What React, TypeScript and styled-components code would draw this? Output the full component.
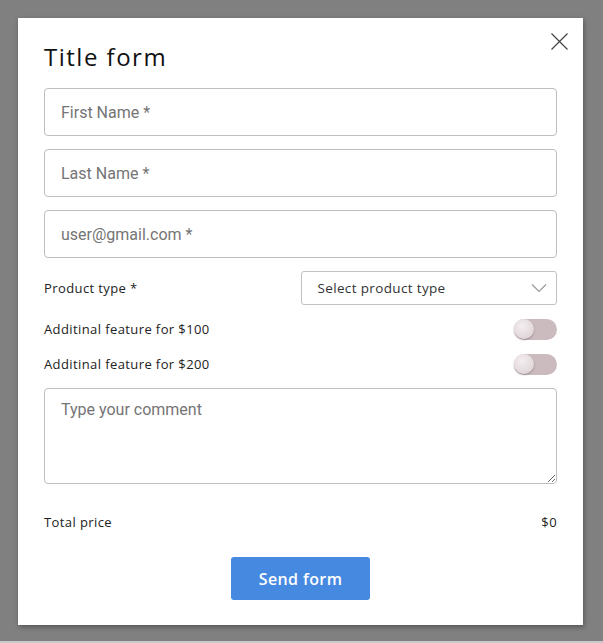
import React from 'react';
import styled, { createGlobalStyle } from 'styled-components';

const GlobalStyle = createGlobalStyle`
	html, body {
		margin: 0;
		padding: 0;
		background: #808080;
	}
	* {
		box-sizing: border-box;
	}
`;

const Page = styled.div`
	min-height: 643px;
	padding: 18px 0 0 18px;
	display: flex;
	align-items: flex-start;
	background: #808080;
	border-bottom: 2px solid #c9c9c9;
`;

const Modal = styled.div`
	position: relative;
	width: 565px;
	background: #fff;
	padding: 24px 26px 25px;
	box-shadow: 1px 2px 5px rgba(0, 0, 0, 0.35);
	font-family: 'Open Sans', 'Noto Sans', sans-serif;
	color: #222;
`;

const CloseButton = styled.button`
	position: absolute;
	top: 15px;
	right: 15px;
	width: 17px;
	height: 17px;
	padding: 0;
	border: none;
	background: transparent;
	cursor: pointer;
`;

const Title = styled.h1`
	margin: 0 0 16px;
	font-size: 24px;
	line-height: 30px;
	font-weight: 500;
	letter-spacing: 1.5px;
	color: #111;
`;

const Form = styled.form`
	display: flex;
	flex-direction: column;
	gap: 13px;
`;

const TextInput = styled.input`
	height: 48px;
	width: 100%;
	padding: 0 16px;
	border: 1px solid #bdbdbd;
	border-radius: 4px;
	font-family: Roboto, sans-serif;
	font-size: 16px;
	color: #333;
	&::placeholder {
		color: #757575;
	}
`;

const Row = styled.div<{ $height: number }>`
	display: grid;
	grid-template-columns: 1fr 1fr;
	align-items: center;
	height: ${(p) => p.$height}px;
`;

const Label = styled.span`
	font-size: 13px;
	letter-spacing: 0.4px;
	color: #222;
`;

const SelectBox = styled.div`
	height: 34px;
	border: 1px solid #c2c2c2;
	border-radius: 3px;
	display: flex;
	align-items: center;
	justify-content: space-between;
	padding: 0 9px 0 16px;
	font-size: 13.5px;
	letter-spacing: 0.35px;
	color: #333;
`;

const Toggle = styled.div`
	justify-self: end;
	width: 43px;
	height: 21px;
	border-radius: 11px;
	background: #cbbbbf;
	position: relative;
`;

const Knob = styled.span`
	position: absolute;
	left: 0;
	top: 0.5px;
	width: 20px;
	height: 20px;
	border-radius: 50%;
	background: radial-gradient(circle at 40% 35%, #f3eef0, #dacdd0);
	box-shadow: 0 1px 2px rgba(0, 0, 0, 0.3);
`;

const Comment = styled.textarea`
	height: 96px;
	width: 100%;
	padding: 11px 16px;
	border: 1px solid #bdbdbd;
	border-radius: 4px;
	font-family: Roboto, sans-serif;
	font-size: 16px;
	resize: vertical;
	&::placeholder {
		color: #757575;
	}
`;

const TotalRow = styled.div`
	margin-top: 16px;
	display: flex;
	justify-content: space-between;
	align-items: center;
	font-size: 13px;
	line-height: 18px;
	letter-spacing: 0.4px;
`;

const SubmitButton = styled.button`
	align-self: center;
	margin-top: 13px;
	width: 139px;
	height: 43px;
	border: none;
	border-radius: 3px;
	background: #4589e1;
	color: #fff;
	font-family: 'Open Sans', 'Noto Sans', sans-serif;
	font-size: 16px;
	font-weight: 600;
	letter-spacing: 0.4px;
	cursor: pointer;
`;

function App(): JSX.Element {
	return (
		<Page>
			<GlobalStyle />
			<Modal>
				<CloseButton aria-label="Close">
					<svg width="17" height="17" viewBox="0 0 17 17">
						<path d="M0.5 0.5 L16.5 16.5 M16.5 0.5 L0.5 16.5" stroke="#444" strokeWidth="1.2" fill="none" />
					</svg>
				</CloseButton>
				<Title>Title form</Title>
				<Form>
					<TextInput placeholder="First Name *" />
					<TextInput placeholder="Last Name *" />
					<TextInput placeholder="user@gmail.com *" />
					<Row $height={34}>
						<Label>Product type *</Label>
						<SelectBox>
							Select product type
							<svg width="16" height="10" viewBox="0 0 16 10">
								<path d="M1 1.5 L8 8.5 L15 1.5" stroke="#9a9a9a" strokeWidth="1.2" fill="none" />
							</svg>
						</SelectBox>
					</Row>
					<Row $height={22}>
						<Label>Additinal feature for $100</Label>
						<Toggle>
							<Knob />
						</Toggle>
					</Row>
					<Row $height={22}>
						<Label>Additinal feature for $200</Label>
						<Toggle>
							<Knob />
						</Toggle>
					</Row>
					<Comment placeholder="Type your comment" />
					<TotalRow>
						<span>Total price</span>
						<span>$0</span>
					</TotalRow>
					<SubmitButton type="button">Send form</SubmitButton>
				</Form>
			</Modal>
		</Page>
	);
}

export default App;
